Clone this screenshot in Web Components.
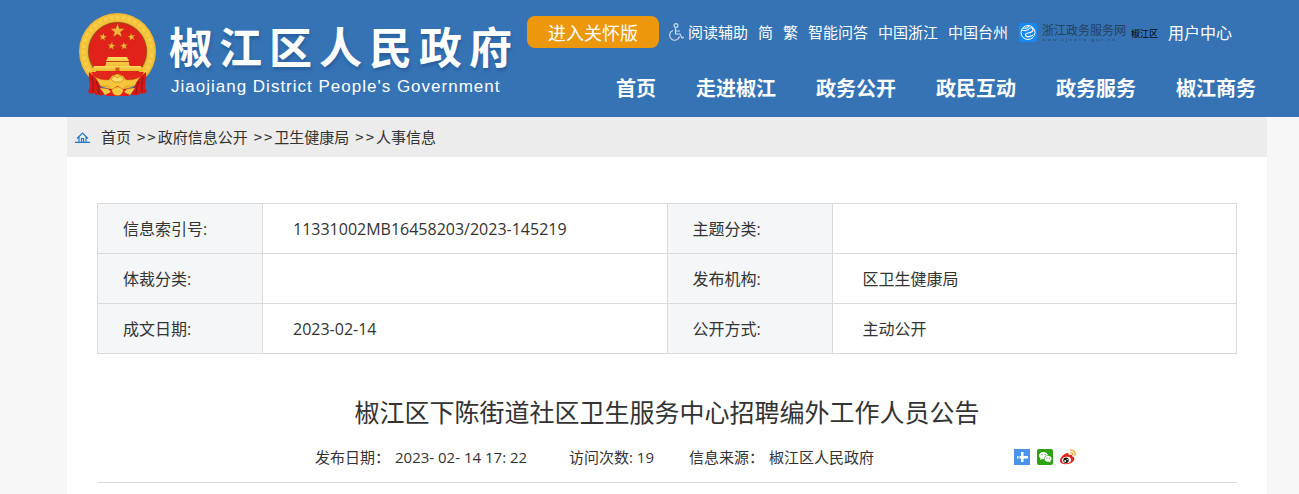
<!DOCTYPE html>
<html lang="zh-CN">
<head>
<meta charset="utf-8">
<title>椒江区下陈街道社区卫生服务中心招聘编外工作人员公告</title>
<style>
html{background:#f7f7f7}
body{margin:0;min-width:1240px;font-family:"Open Sans","Noto Sans CJK SC",sans-serif;font-size:16px;color:#333}
</style>
</head>
<body>
<gov-page></gov-page>
<script>
const define = (name, html) => {
  const t = document.createElement('template');
  t.innerHTML = html;
  customElements.define(name, class extends HTMLElement {
    constructor() {
      super();
      this.attachShadow({ mode: 'open' }).append(t.content.cloneNode(true));
    }
    connectedCallback() {
      const a = this.shadowRoot.querySelector('a');
      if (a && this.hasAttribute('href')) a.href = this.getAttribute('href');
    }
  });
};

define('plain-link', `
<style>
:host{display:block;flex:none}
a{display:block;color:inherit;text-decoration:none;white-space:nowrap}
</style>
<a href="#"><slot></slot></a>`);

const star = (x, y, r, rot) => {
  let p = '';
  for (let i = 0; i < 10; i++) {
    const q = i % 2 ? r * 0.4 : r, a = (rot + i * 36 - 90) * Math.PI / 180;
    p += (x + q * Math.cos(a)).toFixed(1) + ',' + (y + q * Math.sin(a)).toFixed(1) + ' ';
  }
  return `<polygon points="${p}" fill="#f0b83a" stroke="#a63a12" stroke-width=".3"/>`;
};

define('national-emblem', `
<style>:host{display:block;flex:none;width:78px;height:84px}svg{display:block}</style>
<svg width="78" height="84" viewBox="0 0 78 84" role="img" aria-label="国徽">
<defs>
<radialGradient id="g" cx=".5" cy=".5" r=".5"><stop offset=".74" stop-color="#c98a17"/><stop offset=".79" stop-color="#f2bf38"/><stop offset=".9" stop-color="#f9d24c"/><stop offset="1" stop-color="#ecb02e"/></radialGradient>
<linearGradient id="h" x1="0" y1="0" x2="0" y2="1"><stop offset="0" stop-color="#f9dc5a"/><stop offset="1" stop-color="#efb42a"/></linearGradient>
</defs>
<circle cx="38.500" cy="38.500" r="38.500" fill="url(#g)"/>
<circle cx="38.500" cy="38.500" r="34" fill="none" stroke="#e0a428" stroke-width="3" stroke-dasharray="2 4" opacity=".35"/>
<circle cx="38.500" cy="38.500" r="29" fill="#e0221a" stroke="#8a4a1a" stroke-width=".8"/>
${star(38.500, 18, 7.5, 0)}${star(24, 24, 4.2, 10)}${star(52.500, 24, 4.2, -10)}${star(32.500, 33, 4.2, 8)}${star(45, 33, 4.2, -8)}
<path d="M29 44h19l2 4H27zM27 49h23v3H27zM26 52h25v4H26z" fill="url(#h)"/>
<path d="M28 48.500h21" stroke="#b64a15" stroke-width=".8"/>
<path d="M15 53h47l2 5H13z" fill="url(#h)"/>
<path d="M36.500 54.500h4V58h-4z" fill="#d8571b"/>
<path d="M12 59h53q-4 8-13 11l-13.500 3-14-3q-8.500-3-12.500-11z" fill="#e3261b"/>
<path d="M10 60q9 8 20 7l3-4 5.500-2 5.500 2 3 4q11 1 20-7l-2 8q-8 6-18 5-4 7-8.500 7t-8.500-7q-10 1-18-5z" fill="#f5c63b" stroke="#c38118" stroke-width=".5"/>
<path d="M32 66l4-3 2.500 2 2.500-2 4 3-3 3h-7z" fill="#fbdc62" stroke="#b97a14" stroke-width=".6"/>
<path d="M10 59q7 5 10 11l5 12q-8 1-10-2-2 2-6-1l2-6q-2-7-1-14z" fill="#d41b18"/>
<path d="M67 59q-7 5-10 11l-5 12q8 1 10-2 2 2 6-1l-2-6q2-7 1-14z" fill="#d41b18"/>
<path d="M13 64q2 8 1 15M17 68q3 6 3 13M64 64q-2 8-1 15M60 68q-3 6-3 13" stroke="#8f1613" fill="none"/>
<path d="M21 75l12 1 5.500-3 5.500 3 12-1-6 8H27z" fill="#de2019"/>
<path d="M21 75l8 1 3 3-6 3zM56 75l-8 1-3 3 6 3zM32.500 77q6-6 12 0l-2 4q-4 3-8 0z" fill="#f6c83d"/>
</svg>`);

define('site-logo', `
<style>
:host{display:flex;align-items:flex-start;gap:12px;flex:none;width:436px;padding-top:13px;color:#fff}
.names{display:flex;flex-direction:column}
strong{font:700 43px/50px "Noto Sans CJK SC",sans-serif;letter-spacing:7px;text-shadow:1px 3px 3px #2a609e;white-space:nowrap;margin-top:7px}
span{font:17px/20px "Liberation Sans",sans-serif;letter-spacing:1px;white-space:nowrap;margin:7px 0 0 2px}
</style>
<national-emblem></national-emblem>
<div class="names"><strong><slot></slot></strong><span><slot name="en"></slot></span></div>`);

define('service-logo', `
<style>
:host{display:block;flex:none;margin-left:1px}
a{display:flex;align-items:center;gap:5px;color:#26405e;text-decoration:none}
svg{display:block}
.name{display:flex;flex-direction:column;width:84px;font:12px/14px "Noto Sans CJK SC",sans-serif;white-space:nowrap}
small{font:5px/5px "Liberation Serif",serif;letter-spacing:2px}
b{font:400 9px/12px "Noto Sans CJK SC",sans-serif;color:#000;padding-top:4px;white-space:nowrap}
</style>
<a href="#"><svg width="18" height="19" viewBox="0 0 18 19" aria-hidden="true"><rect width="18" height="19" rx="3" fill="#1689f5"/><circle cx="9" cy="9.500" r="7" fill="none" stroke="#fff" stroke-width="1"/><path d="M3 7q5 2 8-2 3-1 3 2 0 2-5 3-4 1-2 3t7-1M4 5q4 1 6-2" fill="none" stroke="#fff" stroke-width="1.200"/></svg>
<span class="name"><span>浙江政务服务网</span><small>www.zjzwfw.gov.cn</small></span><b>椒江区</b></a>`);

define('tool-bar', `
<style>
:host{display:flex;align-items:center;gap:10px;height:32px;color:#fff;font:15px/20px "Noto Sans CJK SC",sans-serif}
button{flex:none;width:132px;height:32px;padding:0;border:0;border-radius:8px;background:#ed970d;color:#fff;font:18px/32px "Noto Sans CJK SC",sans-serif}
.read{display:flex;align-items:center;gap:4px;color:inherit;text-decoration:none;white-space:nowrap}
.user{font-size:16px}
svg{display:block}
</style>
<button type="button">进入关怀版</button>
<a class="read" href="#"><svg width="15" height="18" viewBox="0 0 15 18" fill="none" stroke="#cbdced" stroke-width="1.200" aria-hidden="true"><circle cx="7" cy="2.500" r="1.900"/><path d="M6.500 5v6h4.500l2 4 2-1M7 8h4M4 7.500a5 5 0 1 0 6.500 6"/></svg>阅读辅助</a>
<plain-link>简</plain-link><plain-link>繁</plain-link><plain-link>智能问答</plain-link><plain-link>中国浙江</plain-link><plain-link>中国台州</plain-link>
<service-logo></service-logo>
<plain-link class="user">用户中心</plain-link>`);

define('main-nav', `
<style>
:host{display:block}
nav{display:flex;justify-content:flex-end;gap:40px;padding-right:11px;color:#fff;font:700 20px/40px "Noto Sans CJK SC",sans-serif}
</style>
<nav><slot></slot></nav>`);

define('site-header', `
<style>
:host{display:flex;gap:12px;background:#3573b5;padding:0 32px 0 79px;min-height:117px}
.right{flex:1;min-width:0;display:flex;flex-direction:column;gap:20px;padding-top:16px}
</style>
<site-logo>椒江区人民政府<span slot="en">Jiaojiang District People's Government</span></site-logo>
<div class="right"><tool-bar></tool-bar>
<main-nav><plain-link>首页</plain-link><plain-link>走进椒江</plain-link><plain-link>政务公开</plain-link><plain-link>政民互动</plain-link><plain-link>政务服务</plain-link><plain-link>椒江商务</plain-link></main-nav></div>`);

define('bread-crumb', `
<style>
:host{display:block;background:#ececec}
nav{display:flex;align-items:center;height:40px;padding-left:8px;font:15px/20px "Noto Sans CJK SC",sans-serif}
svg{display:block;margin-right:11px}
i{font-style:normal;letter-spacing:2px;padding-left:6px}
</style>
<nav aria-label="当前位置"><svg width="15" height="11" viewBox="0 0 15 11" fill="none" stroke="#1e78cf" stroke-width="1.200" aria-hidden="true"><path d="M2 6.500L7.500 1 13 6.500M4 5v5M11 5v5M0 10.300h15M6.500 10V6.500h2V10"/></svg>
<plain-link>首页</plain-link><i>&gt;&gt;</i><plain-link>政府信息公开</plain-link><i>&gt;&gt;</i><plain-link>卫生健康局</plain-link><i>&gt;&gt;</i><plain-link>人事信息</plain-link></nav>`);

define('info-table', `
<style>
:host{display:block}
table{width:100%;border-collapse:collapse;table-layout:fixed}
th,td{box-sizing:border-box;height:50px;border:1px solid #d9dadc;padding:0 0 0 30px;text-align:left;font-weight:400;line-height:24px}
th{background:#f4f6f8;padding-left:25px}
.l{width:165px}
</style>
<table>
<colgroup><col class="l"><col><col class="l"><col></colgroup>
<tr><th scope="row">信息索引号:</th><td>11331002MB16458203/2023-145219</td><th scope="row">主题分类:</th><td></td></tr>
<tr><th scope="row">体裁分类:</th><td></td><th scope="row">发布机构:</th><td>区卫生健康局</td></tr>
<tr><th scope="row">成文日期:</th><td>2023-02-14</td><th scope="row">公开方式:</th><td>主动公开</td></tr>
</table>`);

define('share-icons', `
<style>
:host{display:flex;gap:7px;flex:none}
button{width:16px;height:16px;padding:0;border:0;background:none}
svg{display:block}
</style>
<button type="button" aria-label="分享"><svg width="16" height="16" viewBox="0 0 16 16"><rect width="16" height="16" fill="#4a92ea"/><path d="M7 3h2.500v4H14v2.500H9.500V13H7V9.500H5.500V7H7zM3 7h1.500v2.500H3z" fill="#fff"/></svg></button>
<button type="button" aria-label="微信"><svg width="16" height="16" viewBox="0 0 16 16"><rect width="16" height="16" rx="2" fill="#2da212"/><path d="M6.500 3C3.800 3 2 4.600 2 6.500c0 1.200.6 2 1.500 2.700L3 11l2-1 2 .2C7 7.600 8.800 6.300 11 6.200 10.600 4.300 8.800 3 6.500 3z" fill="#fff"/><path d="M11 6.800c-2 0-3.500 1.300-3.500 3s1.500 3 3.500 3l1-.1 1.700.8-.5-1.500c.8-.5 1.300-1.300 1.300-2.200 0-1.700-1.500-3-3.500-3z" fill="#fff"/><path d="M4.500 5h1v1h-1zM7.700 5h1v1h-1zM9.500 8.500h.9v.9h-.9zM12 8.500h.9v.9H12z" fill="#2da212"/></svg></button>
<button type="button" aria-label="微博"><svg width="16" height="16" viewBox="0 0 16 16"><path d="M6 4.500c2-1 3 0 2.500 1.600 2-.8 4-.6 3.500 1.200 3.500 1 2.500 4.200.5 5.800-3 2.400-8 3-11 1.200C-.8 12.500-.3 10 1.500 8 3 6 4.500 5 6 4.500z" fill="#e1231d"/><ellipse cx="6.500" cy="11" rx="4.600" ry="3.200" transform="rotate(-10 6.500 11)" fill="#fff"/><circle cx="6" cy="11.300" r="2.700" fill="#151515"/><circle cx="5.200" cy="12" r="1" fill="#fff"/><circle cx="7.200" cy="10.700" r=".6" fill="#fff"/><path d="M10 1.200c3.700-.8 6 2.300 4.800 5.500M10.300 3.700c1.900-.4 3 1 2.400 2.700" fill="none" stroke="#f2a32c" stroke-width="1.300"/></svg></button>`);

define('article-meta', `
<style>
:host{display:flex;align-items:center;justify-content:center;padding:0 0 15px 57px;border-bottom:1px solid #d9dadc;font-size:15px;line-height:20px;white-space:nowrap}
div{flex:none;width:254px;display:flex;gap:5px}
.v{width:120px}
.s{width:325px}
</style>
<div><span>发布日期：</span><time>2023- 02- 14 17: 22</time></div><div class="v">访问次数: 19</div><div class="s"><span>信息来源：</span><span>椒江区人民政府</span></div>
<share-icons></share-icons>`);

define('gov-page', `
<style>
:host{display:block}
main{margin:0 32px 0 67px;background:#fff;min-height:calc(100vh - 117px)}
article{padding:46px 30px 11px}
h1{margin:37px 0 16px;font:400 25px/40px "Noto Sans CJK SC",sans-serif;text-align:center}
</style>
<site-header></site-header>
<main><bread-crumb></bread-crumb>
<article><info-table></info-table><h1>椒江区下陈街道社区卫生服务中心招聘编外工作人员公告</h1><article-meta></article-meta></article></main>`);
</script>
</body>
</html>
